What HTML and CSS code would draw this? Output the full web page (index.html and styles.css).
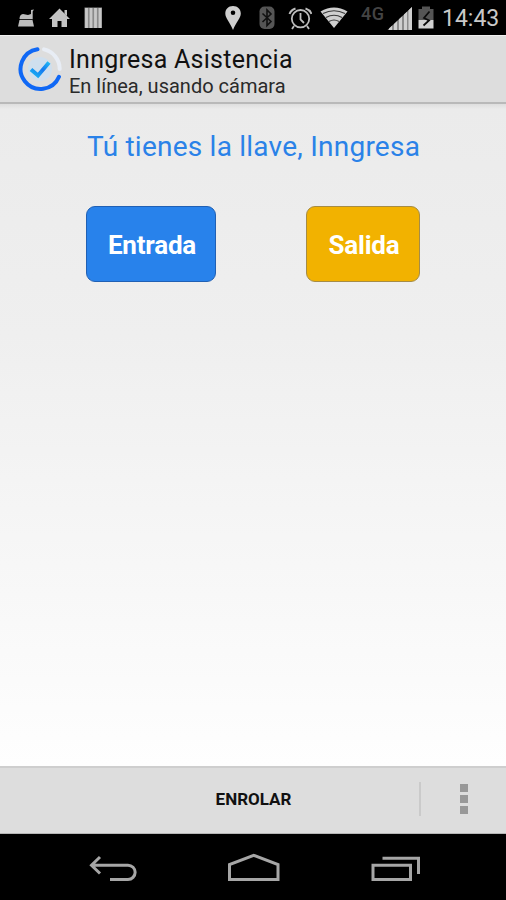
FILE: index.html
```
<!DOCTYPE html>
<html lang="es">
<head>
    <meta charset="UTF-8">
    <title>Inngresa Asistencia</title>
    <meta name="viewport" content="width=device-width, initial-scale=1.0">
    <link rel="stylesheet" href="styles.css">
</head>
<body>
    <!-- Status bar -->
    <div class="status-bar">
        <div class="status-left">
            <!-- Cleaner -->
            <svg width="17" height="36" viewBox="18 0 17 36" fill="#bdbdbd">
                <path d="M18 26.500 L19.500 20 H32.500 L34 26.500 Z"/>
                <path d="M19.500 19 Q19.500 14.500 23 14 L28 15 L31 14 V10 L34 9.500 L32.700 11.500 V19 Z"/>
                <path stroke="#222" stroke-width="1" d="M20 19.500 H33"/>
            </svg>
            <!-- House -->
            <svg width="21" height="36" viewBox="49 0 21 36" fill="#c4c4c4">
                <path d="M59.500 8.500 L70 19 H67 V27 H61.500 V21 H57.500 V27 H52 V19 H49 Z"/>
                <path d="M64.500 10 H67 V16 L64.500 14 Z"/>
            </svg>
            <!-- Bars -->
            <svg width="18" height="36" viewBox="84 0 18 36">
                <path fill="#8a8a8a" d="M84.500 7.500 H102 V28 H84.500 Z"/>
                <path stroke="#c8c8c8" stroke-width="2.800" d="M86.500 8V28M91 8V28M95.500 8V28M100 8V28"/>
            </svg>
        </div>
        <div class="status-right">
            <!-- Location -->
            <svg width="16" height="36" viewBox="225 0 16 36">
                <path fill="#cfcfcf" fill-rule="evenodd" d="M233 6 C228.300 6 225.300 9.300 225.300 13.500 C225.300 18 229.500 21.500 233 30 C236.500 21.500 240.800 18 240.800 13.500 C240.800 9.300 237.700 6 233 6 Z M233 10.500 A2.300 2.300 0 1 1 233 15.100 A2.300 2.300 0 1 1 233 10.500 Z"/>
            </svg>
            <!-- Bluetooth -->
            <svg width="16" height="36" viewBox="259 0 16 36">
                <rect x="259.500" y="6.500" width="15" height="22.500" rx="5" fill="#555"/>
                <path fill="none" stroke="#101010" stroke-width="1.600" d="M262.500 13.500 L271 21.500 L267 25.500 V10 L271 14 L262.500 22"/>
            </svg>
            <!-- Alarm -->
            <svg width="24" height="36" viewBox="288 0 24 36" fill="none" stroke="#bdbdbd" stroke-width="1.800">
                <circle cx="300.500" cy="18.700" r="8.700"/>
                <path d="M300.500 13 V19.500 L304 23 M294 26 L292 29 M307 26 L309 29"/>
                <path stroke-width="2" d="M289.500 14 Q291 10 295.500 8.500 M305.500 8.500 Q310 10 311.500 14"/>
            </svg>
            <!-- Wi-Fi -->
            <svg width="28" height="36" viewBox="320 0 28 36">
                <path fill="#cfcfcf" d="M320.500 11.500 Q334 3.500 347.500 11.500 L334 28 Z"/>
                <path fill="none" stroke="#3a3a3a" stroke-width="1.200" d="M323 13.500 Q334 8 345 13.500 M326 17.500 Q334 13 342 17.500 M329 21.500 Q334 18.500 339 21.500"/>
            </svg>
            <span class="network">4G</span>
            <!-- Signal -->
            <svg width="25" height="36" viewBox="387 0 25 36">
                <path fill="#8c8c8c" d="M387.500 30 L412 7 V30 Z"/>
                <path fill="#cfcfcf" d="M389 28.500 L392 25.700 V30 H389 Z M394 24 L397 21.200 V30 H394 Z M399 19.300 L402 16.500 V30 H399 Z M404 14.500 L407 11.800 V30 H404 Z M408.500 10.300 L412 7 V30 H408.500 Z"/>
            </svg>
            <!-- Battery -->
            <svg width="16" height="36" viewBox="418 0 16 36">
                <path fill="#555" d="M422 6.500 H430 V9 H433.500 V20 H418.500 V9 H422 Z"/>
                <path fill="#d2d2d2" d="M418.500 20 H433.500 V28.500 H418.500 Z"/>
                <path fill="none" stroke="#0c0c0c" stroke-width="1.800" d="M429.500 11.500 L424 18 L429 20.500 L423.500 25.500"/>
            </svg>
            <span class="clock">14:43</span>
        </div>
    </div>

    <!-- Action bar -->
    <header class="action-bar">
        <svg class="logo" width="46" height="46" viewBox="0 0 46 46" fill="none" stroke-linecap="round">
            <defs>
                <linearGradient id="check" x1="0" y1="1" x2="1" y2="0">
                    <stop offset="0%" stop-color="#18b4f4"/>
                    <stop offset="55%" stop-color="#1479f0"/>
                    <stop offset="100%" stop-color="#20b8f4"/>
                </linearGradient>
            </defs>
            <circle cx="23" cy="23" r="12" fill="#cfdfee"/>
            <path stroke="#e8edf5" stroke-width="4" d="M27 3.400 A20 20 0 0 1 42.700 23"/>
            <path stroke="#1068f5" stroke-width="4" d="M20.500 3.200 A20 20 0 1 0 42 30.800"/>
            <path stroke="url(#check)" stroke-width="4" stroke-linecap="butt" d="M14 23.500 L21 29.500 L32 16.500"/>
        </svg>
        <div class="titles">
            <h1 class="title">Inngresa Asistencia</h1>
            <p class="subtitle">En línea, usando cámara</p>
        </div>
    </header>

    <!-- Content -->
    <main class="content">
        <p class="slogan">Tú tienes la llave, Inngresa</p>
        <div class="buttons">
            <button class="btn btn-in">Entrada</button>
            <button class="btn btn-out">Salida</button>
        </div>
    </main>

    <!-- Bottom menu -->
    <footer class="menu-bar">
        <button class="enroll">ENROLAR</button>
        <div class="overflow">
            <span class="dot"></span>
            <span class="dot"></span>
            <span class="dot"></span>
        </div>
    </footer>

    <!-- Navigation bar -->
    <nav class="nav-bar">
        <svg width="48" height="28" viewBox="89 855 48 28">
            <path d="M100 857 L91.500 865.200 L100 873.500 M91.500 865.200 H128 A7 7 0 0 1 128 879.500 H110"/>
        </svg>
        <svg width="52" height="30" viewBox="228 853 52 30">
            <path d="M229.500 879.500 V864.500 L253.700 855.300 L278 864.500 V879.500 Z"/>
        </svg>
        <svg width="50" height="28" viewBox="371 855 50 28">
            <path d="M373 865.200 H410.500 V879.500 H373 Z M382.500 858.300 H418.500 V874"/>
        </svg>
    </nav>
</body>
</html>
```
FILE: styles.css
```
/* ====== Base Layout ====== */
* {
    box-sizing: border-box;
}
body {
    margin: 0;
    height: 900px;
    display: flex;
    flex-direction: column;
    overflow: hidden;
    font-family: Roboto, sans-serif;
    background: #000;
}
svg {
    display: block;
    flex: none;
}
button {
    font-family: inherit;
    margin: 0;
}

/* ====== Status Bar ====== */
.status-bar {
    height: 35px;
    flex: none;
    display: flex;
    justify-content: space-between;
    padding: 0 8px 0 18px;
    background: #000;
}
.status-left,
.status-right {
    display: flex;
}
.status-left {
    gap: 14px;
}
.status-right svg {
    margin-right: 6px;
}
.status-right svg:nth-child(1) {
    margin-right: 18px;
}
.status-right svg:nth-child(2) {
    margin-right: 13px;
}
.status-right svg:nth-child(3) {
    margin-right: 8px;
}
.status-right svg:nth-child(4) {
    margin-right: 13px;
}
.network {
    width: 26px;
    font-size: 18px;
    line-height: 27px;
    letter-spacing: 0.5px;
    font-weight: 500;
    color: #444;
}
.clock {
    width: 56px;
    margin-left: 2px;
    font-size: 23px;
    line-height: 38px;
    color: #c9c9c9;
    white-space: nowrap;
}

/* ====== Action Bar ====== */
.action-bar {
    height: 69px;
    flex: none;
    display: flex;
    padding: 11px 0 0 17px;
    background: #ddd;
    border-top: 1px solid #f0f0f0;
    border-bottom: 2px solid #b9b9b9;
}
.titles {
    margin-left: 6px;
}
.logo {
    margin-top: -1px;
}
.title {
    margin: -2px 0 0;
    font-size: 25px;
    line-height: 30px;
    letter-spacing: 0.26px;
    font-weight: 400;
    color: #111;
    white-space: nowrap;
}
.subtitle {
    margin: -1px 0 0;
    font-size: 20px;
    line-height: 24px;
    color: #2a2a2a;
    white-space: nowrap;
}

/* ====== Content ====== */
.content {
    flex: 1;
    padding: 25px 86px 0;
    background: linear-gradient(#dedede 0, #ebebeb 5px, #efefef 35%, #fefefe 100%);
}
.slogan {
    margin: 0 0 0 1px;
    font-size: 28px;
    line-height: 36px;
    letter-spacing: 0.23px;
    color: #2a82e8;
    white-space: nowrap;
}
.buttons {
    display: flex;
    justify-content: space-between;
    margin-top: 41px;
}
.btn {
    height: 76px;
    padding: 2px 0 0;
    border: 1px solid #2060b4;
    border-radius: 9px;
    font-size: 26px;
    font-weight: 700;
    letter-spacing: -0.2px;
    color: #fff;
}
.btn-in {
    width: 130px;
    padding-left: 2px;
    background: #2882eb;
}
.btn-out {
    width: 114px;
    padding-left: 2px;
    background: #f2b200;
    border-color: #a68c45;
}

/* ====== Bottom Menu ====== */
.menu-bar {
    height: 68px;
    flex: none;
    display: flex;
    align-items: center;
    padding-bottom: 3px;
    background: #ddd;
    border-top: 2px solid #cecece;
    border-bottom: 1px solid #b5b5b5;
}
.enroll {
    flex: 1;
    padding: 0 0 0 88px;
    border: 0;
    background: none;
    font-size: 17px;
    font-weight: 700;
    color: #111;
}
.overflow {
    width: 87px;
    height: 34px;
    display: flex;
    flex-direction: column;
    align-items: center;
    justify-content: center;
    gap: 3px;
    border-left: 2px solid #cacaca;
}
.dot {
    width: 8px;
    height: 8px;
    background: #989898;
}

/* ====== Navigation Bar ====== */
.nav-bar {
    height: 66px;
    flex: none;
    display: flex;
    align-items: flex-end;
    justify-content: space-between;
    padding: 0 85px 17px 89px;
    background: #000;
}
.nav-bar path {
    fill: none;
    stroke: #a6a6a6;
    stroke-width: 3;
}
```
